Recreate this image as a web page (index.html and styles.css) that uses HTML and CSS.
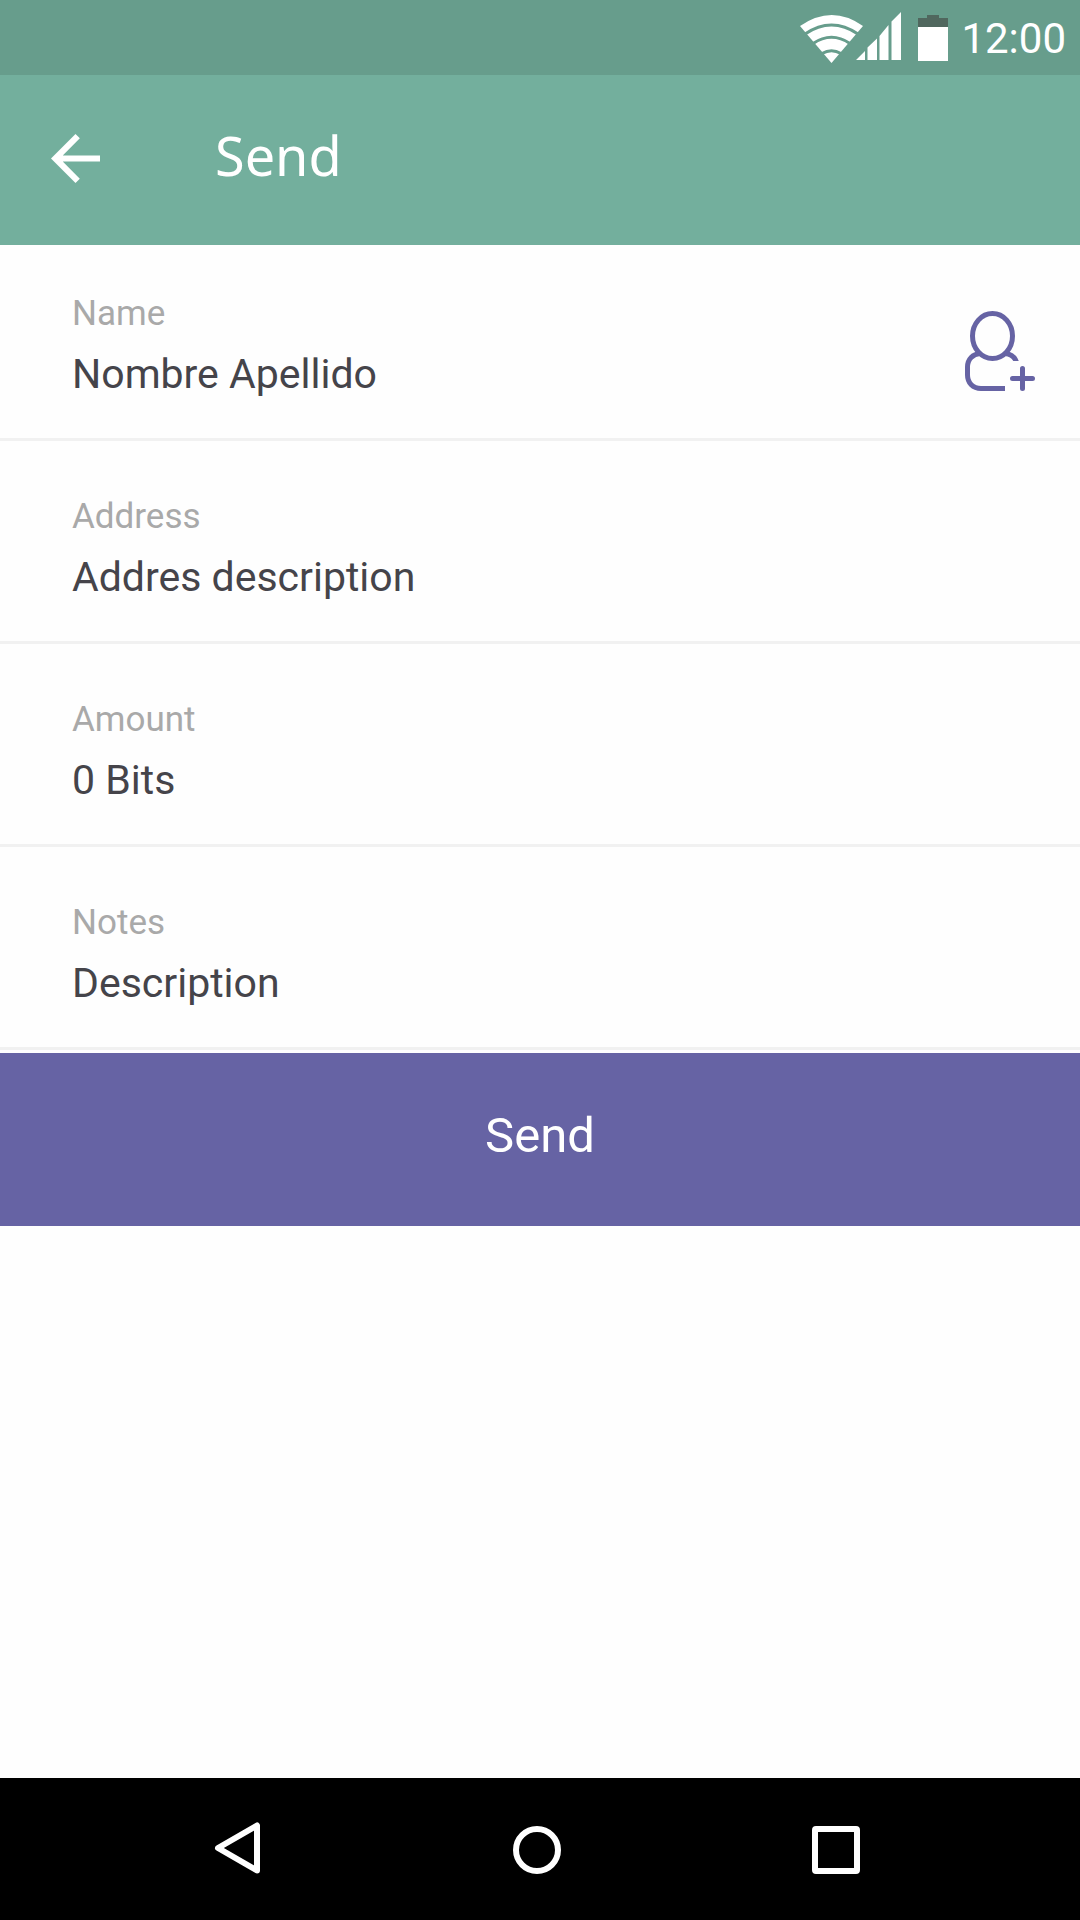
FILE: index.html
```html
<!DOCTYPE html>
<html lang="en">
<head>
<meta charset="utf-8">
<meta name="viewport" content="width=device-width, initial-scale=1">
<title>Send</title>
<link rel="stylesheet" href="styles.css">
</head>
<body>
<div class="status-bar">
  <svg class="connectivity" width="102" height="51" viewBox="0 0 102 51" aria-hidden="true">
    <path class="fill-white" d="M0 14Q32-8 63 14L31.500 51Z"/>
    <path class="wifi-gap" d="M5 22Q31.500 4 58 22M13 31.500Q31.500 19 50 31.500M22 41.500Q31.500 36 41 41.500"/>
    <path class="fill-white" d="M56 48L65 39V48ZM67.500 48V35.500L77 26.500V48ZM79.500 48V24L88.500 13V48ZM91.500 48V9.500L101 0V48Z"/>
  </svg>
  <svg class="battery" width="32" height="46" viewBox="0 0 32 46" aria-hidden="true">
    <path class="battery-empty" d="M10 0H22V3H31V13H1V3H10Z"/>
    <path class="fill-white" d="M1 12H31V46H1Z"/>
  </svg>
  <time class="clock">12:00</time>
</div>
<header class="app-bar">
  <button class="icon-button back" type="button" aria-label="Back">
    <svg width="49" height="49" viewBox="4 4 16 16"><path class="fill-white" d="M20 11H7.830l5.590-5.590L12 4l-8 8 8 8 1.410-1.410L7.830 13H20z"/></svg>
  </button>
  <h1 class="title">Send</h1>
</header>
<main class="content">
  <form class="send-form">
    <div class="field field-first">
      <div class="field-text">
        <label class="label" for="name">Name</label>
        <input class="value" id="name" type="text" value="Nombre Apellido">
      </div>
      <button class="icon-button" type="button" aria-label="Add contact">
        <svg class="contact" width="71" height="82" viewBox="0 0 71 82">
          <clipPath id="shoulder"><path d="M35 35H60V51H35Z"/></clipPath>
          <ellipse cx="27.500" cy="26" rx="20" ry="22.500"/>
          <path d="M15 43.500C8 44 2.500 49 2.500 57V65C2.500 73 8 78.500 16 78.500H40"/>
          <path clip-path="url(#shoulder)" d="M40 43.500C46 44 50.500 47 52 54"/>
          <path class="plus" d="M47.500 68.500H67.500M57.500 58.500V78.500"/>
        </svg>
      </button>
    </div>
    <div class="field">
      <div class="field-text">
        <label class="label" for="address">Address</label>
        <input class="value" id="address" type="text" value="Addres description">
      </div>
    </div>
    <div class="field">
      <div class="field-text">
        <label class="label" for="amount">Amount</label>
        <input class="value" id="amount" type="text" value="0 Bits">
      </div>
    </div>
    <div class="field">
      <div class="field-text">
        <label class="label" for="notes">Notes</label>
        <input class="value" id="notes" type="text" value="Description">
      </div>
    </div>
    <button class="submit" type="submit">Send</button>
  </form>
</main>
<nav class="nav-bar" aria-label="System">
  <button class="icon-button" type="button" aria-label="Back">
    <svg class="nav-icon" width="48" height="52" viewBox="0 0 48 52"><path d="M43 3.500V48.500L4 26Z"/></svg>
  </button>
  <button class="icon-button" type="button" aria-label="Home">
    <svg class="nav-icon" width="48" height="52" viewBox="0 0 48 52"><circle cx="24" cy="28" r="21"/></svg>
  </button>
  <button class="icon-button" type="button" aria-label="Recent apps">
    <svg class="nav-icon" width="48" height="52" viewBox="0 0 48 52"><rect x="3" y="7" width="42" height="42" rx="1"/></svg>
  </button>
</nav>
</body>
</html>
```
FILE: styles.css
```css
* {
  box-sizing: border-box;
}

body {
  display: flex;
  flex-direction: column;
  min-height: 100vh;
  margin: 0;
  background: #fefefe;
  color: #45444a;
  font-family: Roboto, "Liberation Sans", sans-serif;
}

button,
input {
  margin: 0;
  padding: 0;
  border: 0;
  background: none;
  font-family: inherit;
}

svg {
  display: block;
}

.fill-white {
  fill: #fff;
}

.icon-button {
  display: flex;
  align-items: center;
  justify-content: center;
}

.status-bar {
  display: flex;
  align-items: center;
  justify-content: flex-end;
  height: 75px;
  padding-right: 14px;
  background: #679d8c;
}

.connectivity {
  margin-right: 15px;
}

.wifi-gap {
  fill: none;
  stroke: #679d8c;
  stroke-width: 3;
}

.battery {
  margin-right: 12px;
}

.battery-empty {
  fill: #50675e;
}

.clock {
  padding-top: 2px;
  color: #fff;
  font-size: 42px;
  line-height: 48px;
}

.app-bar {
  display: flex;
  align-items: center;
  gap: 115px;
  height: 170px;
  padding: 0 51px 4px;
  background: #73af9d;
}

.title {
  margin: 0;
  padding-bottom: 7px;
  color: #fff;
  font-family: "Noto Sans", "Open Sans", sans-serif;
  font-size: 54px;
  font-weight: 400;
  line-height: 72px;
}

.content {
  flex: 1;
}

.field {
  display: flex;
  align-items: flex-end;
  height: 203px;
  padding: 0 44px 38px 72px;
  border-bottom: 3px solid #f1f1f1;
}

.field-first {
  height: 196px;
}

.field-text {
  display: flex;
  flex: 1;
  flex-direction: column;
  gap: 10px;
}

.label {
  color: #a9a9a9;
  font-size: 35px;
  line-height: 48px;
}

.value {
  width: 100%;
  height: 52px;
  color: #45444a;
  font-size: 41px;
  line-height: 52px;
}

.contact {
  margin-bottom: 8px;
  fill: none;
  stroke: #6663a4;
  stroke-width: 5;
}

.plus {
  stroke-linecap: round;
}

.submit {
  display: block;
  width: 100%;
  height: 173px;
  margin-top: 3px;
  padding-bottom: 8px;
  background: #6663a4;
  color: #fff;
  font-size: 49px;
}

.nav-bar {
  display: grid;
  grid-template-columns: repeat(3, 1fr);
  height: 142px;
  padding: 0 94px 2px 88px;
  background: #000;
}

.nav-icon {
  fill: none;
  stroke: #fff;
  stroke-linejoin: round;
  stroke-width: 6;
}
```
